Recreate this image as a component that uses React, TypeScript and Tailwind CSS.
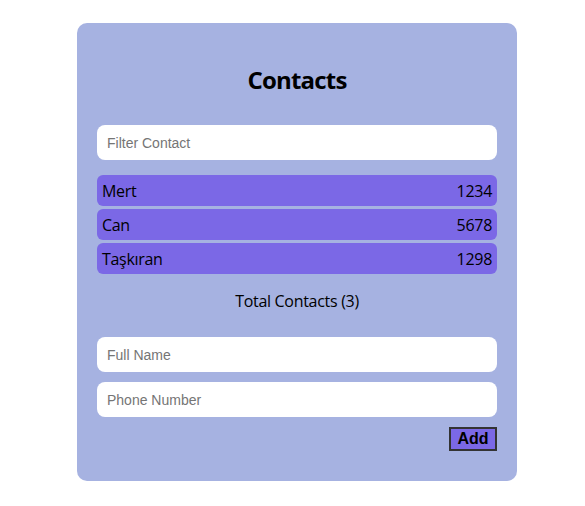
import { useState } from "react";

type Contact = { name: string; phone: string };

const INITIAL: Contact[] = [
  { name: "Mert", phone: "1234" },
  { name: "Can", phone: "5678" },
  { name: "Taşkıran", phone: "1298" },
];

export default function App() {
  const [contacts, setContacts] = useState<Contact[]>(INITIAL);
  const [filter, setFilter] = useState("");
  const [name, setName] = useState("");
  const [phone, setPhone] = useState("");

  const filtered = contacts.filter((c) =>
    c.name.toLowerCase().includes(filter.toLowerCase()),
  );

  const handleAdd = () => {
    if (!name || !phone) return;
    setContacts((prev) => [...prev, { name, phone }]);
    setName("");
    setPhone("");
  };

  return (
    <div className="min-h-screen bg-white pt-[23px] pl-[77px] font-['Segoe_UI','Open_Sans',sans-serif]">
      <div className="flex w-[440px] flex-col rounded-[10px] bg-[#a6b2e1] px-5 pt-[41px] pb-[30px]">
        <h1 className="text-center text-2xl leading-8 font-bold tracking-[-0.8px] text-black">
          Contacts
        </h1>

        <input
          value={filter}
          onChange={(e) => setFilter(e.target.value)}
          placeholder="Filter Contact"
          className="mt-[29px] h-[35px] w-full rounded-lg bg-white px-2.5 font-['Liberation_Sans',Arial,sans-serif] text-sm outline-none placeholder:text-[#757575]"
        />

        <ul className="mt-[15px] flex flex-col gap-[3px]">
          {filtered.map((c) => (
            <li
              key={c.name}
              className="flex h-[31px] items-center justify-between rounded-md bg-[#7b68e6] px-[5px] text-base tracking-[-0.3px] text-black"
            >
              <span>{c.name}</span>
              <span>{c.phone}</span>
            </li>
          ))}
        </ul>

        <p className="mt-[17px] text-center text-base leading-[21px] tracking-[-0.3px] text-black">
          Total Contacts ({filtered.length})
        </p>

        <input
          value={name}
          onChange={(e) => setName(e.target.value)}
          placeholder="Full Name"
          className="mt-[25px] h-[35px] w-full rounded-lg bg-white px-2.5 font-['Liberation_Sans',Arial,sans-serif] text-sm outline-none placeholder:text-[#757575]"
        />
        <input
          value={phone}
          onChange={(e) => setPhone(e.target.value)}
          placeholder="Phone Number"
          className="mt-2.5 h-[35px] w-full rounded-lg bg-white px-2.5 font-['Liberation_Sans',Arial,sans-serif] text-sm outline-none placeholder:text-[#757575]"
        />

        <div className="mt-2.5 flex justify-end">
          <button
            type="button"
            onClick={handleAdd}
            className="h-6 w-12 border-2 border-[#333] bg-[#7b68e6] font-['Liberation_Sans',Arial,sans-serif] text-base leading-none font-bold text-black"
          >
            Add
          </button>
        </div>
      </div>
    </div>
  );
}
